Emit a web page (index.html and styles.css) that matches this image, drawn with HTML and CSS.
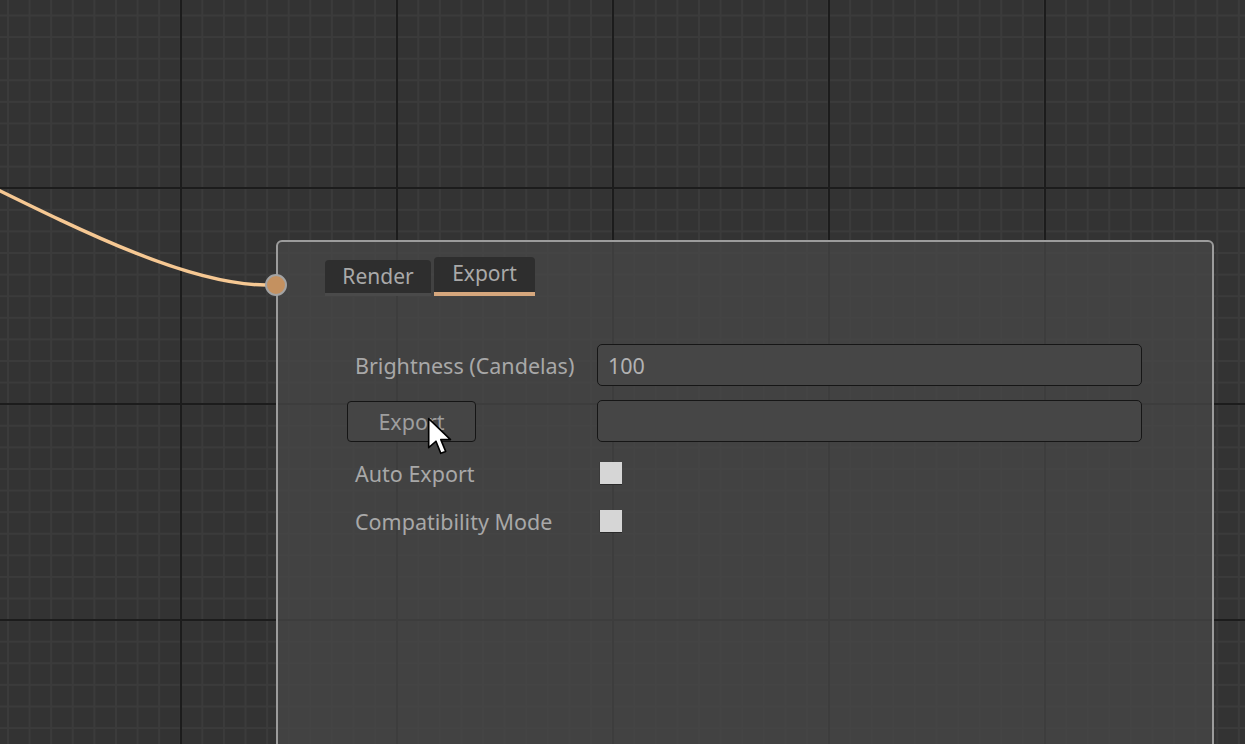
FILE: index.html
```html
<!DOCTYPE html>
<html>
<head>
<meta charset="utf-8">
<link rel="stylesheet" href="styles.css">
</head>
<body>
<div class="canvas">
  <svg class="wire" width="1245" height="744" viewBox="0 0 1245 744">
    <path d="M -300 80 C -150 80, 116 285, 266 285" fill="none" stroke="#f6c893" stroke-width="3.5"/>
  </svg>
  <div class="node">
    <div class="tabs">
      <div class="tab render">Render</div>
      <div class="tab active">Export</div>
    </div>
    <div class="form">
      <div class="label">Brightness (Candelas)</div>
      <div class="field"><div class="input">100</div></div>
      <div class="label btn-cell"><div class="button">Export</div></div>
      <div class="field"><div class="input"></div></div>
      <div class="label">Auto Export</div>
      <div class="field"><div class="checkbox"></div></div>
      <div class="label">Compatibility Mode</div>
      <div class="field"><div class="checkbox"></div></div>
    </div>
  </div>
  <div class="port"></div>
  <svg class="cursor" width="26" height="42" viewBox="0 0 16 26">
    <path d="M1 1 L1 19 L5.5 15 L8.5 22.5 L11.5 21.3 L8.5 14 L14.5 14 Z" fill="#ffffff" stroke="#000000" stroke-width="1" stroke-linejoin="round"/>
  </svg>
</div>
</body>
</html>
```
FILE: styles.css
```css
html, body {
  margin: 0;
  padding: 0;
  width: 1245px;
  height: 744px;
  overflow: hidden;
}
body {
  font-family: "Noto Sans", "Open Sans", sans-serif;
  background-color: #333333;
}
.canvas {
  position: relative;
  width: 1245px;
  height: 744px;
  background-color: #333333;
  background-image:
    linear-gradient(to right, #1c1c1c 2px, transparent 2px),
    linear-gradient(to bottom, #1c1c1c 2px, transparent 2px),
    linear-gradient(to right, #3b3b3b 1.5px, transparent 1.5px),
    linear-gradient(to bottom, #3b3b3b 1.5px, transparent 1.5px);
  background-size: 216px 100%, 100% 216px, 21.6px 100%, 100% 21.6px;
  background-position: 180px 0, 0 187px, 7px 0, 0 14.5px;
  overflow: hidden;
}
.wire {
  position: absolute;
  left: 0;
  top: 0;
}
.node {
  position: absolute;
  left: 276px;
  top: 240px;
  width: 934px;
  height: 540px;
  border: 2px solid #9c9c9c;
  border-radius: 6px;
  background: rgba(70, 70, 70, 0.78);
  display: flex;
  flex-direction: column;
}
.tabs {
  display: flex;
  align-items: flex-end;
  gap: 3px;
  padding: 15px 0 0 47px;
  height: 39px;
}
.tab {
  height: 33px;
  width: 106px;
  box-sizing: content-box;
  text-align: center;
  background: #2e2e2e;
  color: #a9a9a9;
  font-size: 21px;
  line-height: 33px;
  border-radius: 4px 4px 0 0;
  border-bottom: 3px solid #4a4a4a;
}
.tab.active {
  width: 101px;
  height: 35px;
  line-height: 32px;
  border-bottom: 4px solid #d6a77d;
}
.form {
  display: grid;
  grid-template-columns: 250px 545px;
  grid-template-rows: 42px 42px 34px 34px;
  row-gap: 14px;
  margin: 48px 0 0 69px;
}
.label {
  display: flex;
  align-items: center;
  padding-left: 8px;
  color: #a8a8a8;
  font-size: 21.5px;
}
.btn-cell {
  padding-left: 0;
}
.button {
  width: 129px;
  height: 41px;
  box-sizing: border-box;
  border: 1px solid #151515;
  border-radius: 4px;
  background: #454545;
  color: #9e9e9e;
  font-size: 21.5px;
  display: flex;
  align-items: center;
  justify-content: center;
  margin-top: 1px;
}
.field {
  display: flex;
  align-items: center;
}
.input {
  flex: 1;
  height: 42px;
  box-sizing: border-box;
  border: 1px solid #161616;
  border-radius: 5px;
  background: #464646;
  color: #b2b2b2;
  font-size: 21.5px;
  padding-left: 10px;
  display: flex;
  align-items: center;
}
.checkbox {
  width: 22px;
  height: 22px;
  margin-left: 3px;
  background: #d6d6d6;
  box-shadow: 0 1px 0 #2a2a2a, -1px 0 0 #3a3a3a;
}
.port {
  position: absolute;
  left: 265px;
  top: 274px;
  width: 18px;
  height: 18px;
  border-radius: 50%;
  background: #c49160;
  border: 2px solid #a3a3a3;
}
.cursor {
  position: absolute;
  left: 427px;
  top: 417px;
}
```
